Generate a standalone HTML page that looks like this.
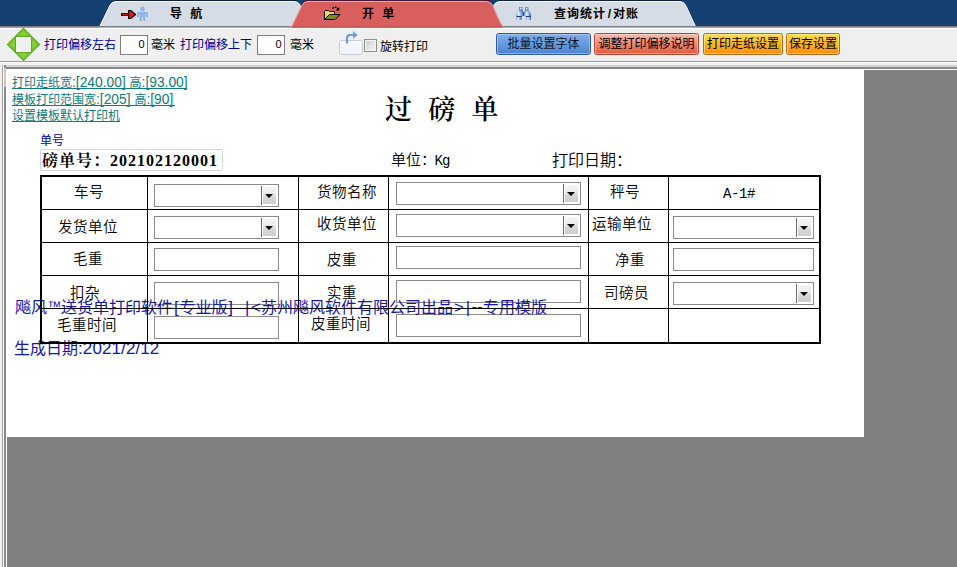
<!DOCTYPE html>
<html lang="zh-CN">
<head>
<meta charset="utf-8">
<title>过磅单</title>
<style>
html,body{margin:0;padding:0;}
body{width:957px;height:567px;overflow:hidden;position:relative;background:#808080;
  font-family:"Liberation Sans","Noto Sans CJK SC",sans-serif;font-size:12px;color:#000;}
.abs{position:absolute;}
.t{position:absolute;white-space:nowrap;line-height:1;}
/* top bar */
#topbar{left:0;top:0;width:957px;height:28px;background:#133f71;}
#topsvg{left:0;top:0;}
.tabtxt{font-weight:bold;font-size:12px;color:#000;letter-spacing:1px;word-spacing:3px;}
/* toolbar */
#toolbar{left:0;top:29px;width:957px;height:32px;background:#efefef;}
.blue{color:#00009c;}
.inp{position:absolute;background:#fff;border:1px solid #7f7f7f;box-sizing:border-box;}
.btn{position:absolute;box-sizing:border-box;height:22px;top:33px;border-radius:2.500px;font-size:12px;line-height:20px;text-align:center;white-space:nowrap;color:#000;}
/* paper */
#paper{left:6px;top:69px;width:858px;height:368px;background:#fff;}
.link{color:#0e7c7c;font-size:12px;}
.ul{position:absolute;height:1px;background:#167a7c;left:12px;}
.lab{font-size:14.500px;letter-spacing:0.500px;color:#000;font-weight:350;margin-top:0.500px;}
.serif{font-family:"Liberation Serif","Noto Serif CJK SC",serif;}
.hl{position:absolute;background:#000;height:1px;z-index:5;}
.vl{position:absolute;background:#000;width:1px;z-index:5;}
.fld{position:absolute;box-sizing:border-box;background:#fff;border:1px solid #8a8a8a;}
.dd{position:absolute;right:2px;top:2px;width:13px;height:17px;background:linear-gradient(#f4f4f4 0%,#eaeaea 47%,#d9d9d9 53%,#cdcdcd 100%);}
.dd:before{content:"";position:absolute;left:-2px;top:-1px;width:1px;height:19px;background:#6c6c6c;}
.dd:after{content:"";position:absolute;left:2.200px;top:7px;border-left:4px solid transparent;border-right:4px solid transparent;border-top:4.500px solid #000;}
.ov{color:#1616aa;font-size:16px;z-index:3;font-weight:400;}
.L{font-size:13.800px;}
.w{display:inline-block;text-align:center;font-size:17px;line-height:1;vertical-align:baseline;}
.m{font-family:"Liberation Mono","Noto Sans CJK SC",monospace;}
</style>
</head>
<body>
<!-- TOP BAR -->
<div class="abs" id="topbar"></div>
<svg class="abs" id="topsvg" width="957" height="29" viewBox="0 0 957 29">
  <defs>
    <linearGradient id="bino" x1="0" y1="0" x2="1" y2="0">
      <stop offset="0" stop-color="#7fa4e0"/><stop offset="0.35" stop-color="#e8f0ff"/><stop offset="1" stop-color="#3c68b8"/>
    </linearGradient>
  </defs>
  <!-- tab 1 -->
  <path d="M99 27.500 L109.500 5.500 Q111.500 1.500 116 1.500 L294.500 1.500 Q298.500 1.500 300.500 5.500 L311 27.500 Z" fill="#d5dce5"/>
  <path d="M99.500 27 L110 5.500 Q112 1.500 116 1.500 L294.500 1.500 Q298.500 1.500 300.500 5.500" fill="none" stroke="#f4f8fc" stroke-width="1"/>
  <!-- tab 3 -->
  <path d="M483 27.500 L493.500 5.500 Q495.500 1.500 500 1.500 L680 1.500 Q684 1.500 686 6 L696 27.500 Z" fill="#d5dce5"/>
  <path d="M493.500 5.500 Q495.500 1.500 500 1.500 L680 1.500 Q684 1.500 686 6 L695.300 26" fill="none" stroke="#f4f8fc" stroke-width="1"/>
  <rect x="114" y="0" width="183" height="1" fill="#0c2444"/><rect x="498" y="0" width="184" height="1" fill="#0c2444"/>
  <rect x="0" y="26" width="957" height="1.600" fill="#7f8084"/>
  <rect x="0" y="27.600" width="957" height="1.400" fill="#fdfdfd"/>
  <!-- tab 2 active -->
  <path d="M291 27.600 L301.500 5.500 Q303.500 1.500 308 1.500 L486.500 1.500 Q491 1.500 493 5.500 L499 19 Q501 24 503.500 26.500 L503.500 27.600 Z" fill="#d95f5f"/>
  <path d="M291.500 27 L302 5.500 Q304 1.500 308 1.500 L486.500 1.500 Q490.500 1.500 492.500 5.500 L498.500 19 Q500.500 24 503 26.500" fill="none" stroke="#f0a4a4" stroke-width="1"/>
  <rect x="303" y="0" width="188" height="1" fill="#4a1838"/>
  <rect x="292" y="26" width="210" height="1.600" fill="#c85858"/>
  <!-- arrow icon -->
  <g shape-rendering="crispEdges">
    <rect x="121" y="13" width="8" height="3" fill="#000"/>
    <rect x="122" y="14" width="8" height="1" fill="#e01818"/>
    <path d="M128 10 L131 10 L136 14 L136 15 L131 19 L128 19 Z" fill="#000" shape-rendering="auto"/>
    <path d="M129.200 11.200 L130.700 11.200 L134.500 14.500 L130.700 17.800 L129.200 17.800 Z" fill="#f01414" shape-rendering="auto"/>
  </g>
  <!-- person icon -->
  <g fill="#8db5ea">
    <circle cx="142.500" cy="9" r="2.400"/>
    <path d="M138.500 12 L146.500 12 Q148 12 148 13.500 L148 17 L146 17 L146 14 L145.300 14 L145.300 21 L143.200 21 L143.200 17 L141.800 17 L141.800 21 L139.700 21 L139.700 14 L139 14 L139 17 L137 17 L137 13.500 Q137 12 138.500 12 Z"/>
  </g>
  <!-- folder icon -->
  <g>
    <path d="M324.500 19.500 L324.500 11.500 L325.500 10.500 L328.500 10.500 L329.500 11.500 L334.500 11.500 L334.500 14.500 L324.500 19.500 Z" fill="#eed85c" stroke="#000" stroke-width="1"/>
    <path d="M324.500 19.500 L329.500 14.500 L340 14.500 L335 19.500 Z" fill="#7e8c1c" stroke="#000" stroke-width="1"/>
    <path d="M332.300 8.600 Q335 5.800 337.800 8.600" fill="none" stroke="#000" stroke-width="1.200" stroke-dasharray="2 0.800"/>
    <path d="M335.600 10.600 L339.300 10.600 L339.300 7 Z" fill="#000"/>
  </g>
  <!-- binoculars -->
  <g>
    <rect x="521.500" y="12" width="4" height="3.800" fill="#2c50a0"/>
    <rect x="519" y="7" width="3.400" height="3.200" fill="#5f84c8"/>
    <rect x="525" y="7" width="3.400" height="3.200" fill="#5f84c8"/>
    <rect x="519.900" y="7.700" width="1.500" height="1.500" fill="#f4f8ff"/>
    <rect x="525.900" y="7.700" width="1.500" height="1.500" fill="#f4f8ff"/>
    <path d="M518.600 10.200 L522.800 10.200 L523.300 12 L523.300 16 L516.300 16 L516.300 14 L517.800 12 Z" fill="url(#bino)"/>
    <path d="M524.600 10.200 L528.800 10.200 L529.600 12 L531.100 14 L531.100 16 L524.300 16 L524.300 12 Z" fill="url(#bino)"/>
    <rect x="518.600" y="10.200" width="4.200" height="1.500" fill="#4468b4" opacity="0.550"/>
    <rect x="524.600" y="10.200" width="4.200" height="1.500" fill="#4468b4" opacity="0.550"/>
    <rect x="516.300" y="16" width="5.600" height="1.300" fill="#1c3c8c"/>
    <rect x="525.800" y="16" width="5.300" height="1.300" fill="#1c3c8c"/>
    <rect x="516.300" y="17.300" width="5.200" height="2.700" fill="url(#bino)"/>
    <rect x="526" y="17.300" width="5.100" height="2.700" fill="url(#bino)"/>
  </g>
</svg>
<div class="t tabtxt" style="left:170px;top:8px;">导 航</div>
<div class="t tabtxt" style="left:362px;top:8px;">开 单</div>
<div class="t tabtxt" style="left:554px;top:8px;">查询统计<span style="display:inline-block;width:7px;text-align:center;letter-spacing:0;">/</span>对账</div>

<!-- TOOLBAR -->
<div class="abs" id="toolbar"></div>
<svg class="abs" style="left:0;top:27px;" width="440" height="35" viewBox="0 27 440 35">
  <defs>
    <linearGradient id="rotbox" x1="0" y1="0" x2="0" y2="1"><stop offset="0" stop-color="#f7fafe"/><stop offset="1" stop-color="#edf3fb"/></linearGradient>
  </defs>
  <!-- green diamond -->
  <path d="M23.500 27.600 L40.400 44.500 L23.500 61.300 L6.600 44.500 Z" fill="#62aa26"/>
  <path d="M23.500 29.200 L38.800 44.500 L23.500 59.700 L8.200 44.500 Z" fill="#7ac62f"/>
  <path d="M23.500 31.500 L27.500 35.500 L19.500 35.500 Z" fill="#88d23c"/>
  <path d="M23.500 57.500 L27.500 53.500 L19.500 53.500 Z" fill="#88d23c"/>
  <path d="M10.500 44.500 L14.500 40.500 L14.500 48.500 Z" fill="#88d23c"/>
  <path d="M36.500 44.500 L32.500 40.500 L32.500 48.500 Z" fill="#88d23c"/>
  <rect x="15" y="36" width="17" height="17" fill="#5ea824"/>
  <rect x="16" y="37" width="15" height="15" fill="#efffd8"/>
  <rect x="17" y="38" width="13" height="13" fill="#efefef"/>
  <!-- rotate icon -->
  <rect x="339.500" y="40.500" width="23" height="14" rx="2" ry="2" fill="url(#rotbox)" stroke="#c8cdd6" stroke-width="1"/>
  <path d="M347 43.500 L347 38 Q347 35 350 35 L353.500 35" fill="none" stroke="#6c9cdc" stroke-width="2.200"/>
  <path d="M353 31.300 L357.800 35 L353 38.700 Z" fill="#6c9cdc"/>
</svg>
<div class="t blue" style="left:44px;top:39px;">打印偏移左右</div>
<div class="inp" style="left:120px;top:35px;width:28px;height:20px;"></div>
<div class="t" style="left:138.500px;top:39px;font-size:11px;">0</div>
<div class="t" style="left:151px;top:39px;">毫米</div>
<div class="t blue" style="left:180px;top:39px;">打印偏移上下</div>
<div class="inp" style="left:257px;top:35px;width:28px;height:20px;"></div>
<div class="t" style="left:275.500px;top:39px;font-size:11px;">0</div>
<div class="t" style="left:290px;top:39px;">毫米</div>
<div class="inp" style="left:364px;top:39px;width:13px;height:13px;border-color:#8e8f8f;background:linear-gradient(135deg,#c8c8c8,#fafafa);box-shadow:inset 0 0 0 1px #f4f4f4;"></div>
<div class="t" style="left:380px;top:41px;">旋转打印</div>
<div class="btn" style="left:496px;width:95px;border:1px solid #2d5c9e;background:linear-gradient(#82aee7,#6a9cdc 45%,#4a84ce);box-shadow:inset 0 0 0 1px rgba(190,215,250,0.550);color:#0a1428;">批量设置字体</div>
<div class="btn" style="left:594px;width:105px;border:1px solid #b8442e;background:linear-gradient(#f7bcae,#ee8c76 45%,#e2583e);box-shadow:inset 0 0 0 1px rgba(255,220,210,0.550);">调整打印偏移说明</div>
<div class="btn" style="left:703px;width:80px;border:1px solid #b46c1c;background:linear-gradient(#ffe04a,#ffb828 45%,#ff8a0c);box-shadow:inset 0 0 0 1px rgba(255,240,170,0.550);">打印走纸设置</div>
<div class="btn" style="left:786px;width:54px;border:1px solid #b46c1c;background:linear-gradient(#ffe04a,#ffb828 45%,#ff8a0c);box-shadow:inset 0 0 0 1px rgba(255,240,170,0.550);">保存设置</div>

<!-- SEPARATOR -->
<div class="abs" style="left:0;top:61px;width:957px;height:1px;background:#9c9c9c;"></div>
<div class="abs" style="left:0;top:62px;width:957px;height:1px;background:#fff;"></div>
<div class="abs" style="left:0;top:63px;width:957px;height:2px;background:#f0f0f0;"></div>
<div class="abs" style="left:0;top:65px;width:957px;height:2px;background:#d3d1d1;"></div>
<div class="abs" style="left:0;top:67px;width:957px;height:2px;background:#88888c;"></div>
<div class="abs" style="left:0;top:69px;width:957px;height:1px;background:#fff;"></div>
<!-- left edge -->
<div class="abs" style="left:0;top:63px;width:2px;height:504px;background:#f0f0f0;"></div>
<div class="abs" style="left:2px;top:65px;width:1px;height:502px;background:#a0a0a0;"></div>
<div class="abs" style="left:3px;top:65px;width:1px;height:502px;background:#fff;"></div>
<div class="abs" style="left:4px;top:65px;width:2px;height:502px;background:#88888e;"></div>
<div class="abs" style="left:4px;top:68px;width:2px;height:19px;background:#e4bcbc;"></div>
<div class="abs" style="left:6px;top:69px;width:1px;height:498px;background:#fff;"></div>

<!-- PAPER -->
<div class="abs" id="paper"></div>
<div class="t link" style="left:12px;top:76px;">打印走纸宽<span class="L">:[240.00] </span>高<span class="L">:[93.00]</span></div>
<div class="t link" style="left:12px;top:93px;">模板打印范围宽<span class="L">:[205] </span>高<span class="L">:[90]</span></div>
<div class="t link" style="left:12px;top:110px;">设置模板默认打印机</div>
<div class="ul" style="top:88px;width:175px;"></div><div class="ul" style="top:105px;width:163px;"></div><div class="ul" style="top:121px;width:108px;"></div>

<div class="t serif" style="left:385px;top:97px;font-size:27px;font-weight:600;letter-spacing:1px;word-spacing:7.5px;">过 磅 单</div>
<div class="t blue" style="left:40px;top:135px;">单号</div>
<div class="abs" style="left:40px;top:149px;width:183px;height:22px;border:1px solid #d4d4dc;border-radius:2px;box-sizing:border-box;"></div>
<div class="t serif" style="left:42px;top:153px;font-size:16px;font-weight:bold;letter-spacing:1px;">磅单号：<span style="letter-spacing:1px;">202102120001</span></div>
<div class="t" style="left:391px;top:152px;font-size:15px;font-weight:350;">单位：<span class="m" style="font-size:14px;letter-spacing:-0.900px;margin-left:-1.500px;">Kg</span></div>
<div class="t" style="left:552px;top:153px;font-size:16px;font-weight:350;">打印日期：</div>

<!-- TABLE -->
<div class="abs" style="left:40px;top:175px;width:781px;height:169px;border:2px solid #000;box-sizing:border-box;z-index:5;"></div>
<div class="hl" style="left:40px;top:209px;width:780px;"></div>
<div class="hl" style="left:40px;top:242px;width:780px;"></div>
<div class="hl" style="left:40px;top:275px;width:780px;"></div>
<div class="hl" style="left:40px;top:308px;width:780px;"></div>
<div class="vl" style="left:147px;top:175px;height:168px;"></div>
<div class="vl" style="left:298px;top:175px;height:168px;"></div>
<div class="vl" style="left:388px;top:175px;height:168px;"></div>
<div class="vl" style="left:588px;top:175px;height:168px;"></div>
<div class="vl" style="left:668px;top:175px;height:168px;"></div>

<div class="t lab" style="left:74px;top:184px;">车号</div>
<div class="t lab" style="left:58px;top:219px;">发货单位</div>
<div class="t lab" style="left:73px;top:251px;">毛重</div>
<div class="t lab" style="left:70px;top:285px;">扣杂</div>
<div class="t lab" style="left:57px;top:317px;">毛重时间</div>
<div class="t lab" style="left:317px;top:184px;">货物名称</div>
<div class="t lab" style="left:317px;top:216px;">收货单位</div>
<div class="t lab" style="left:327px;top:252px;">皮重</div>
<div class="t lab" style="left:327px;top:285px;">实重</div>
<div class="t lab" style="left:311px;top:316px;">皮重时间</div>
<div class="t lab" style="left:610px;top:184px;">秤号</div>
<div class="t lab" style="left:592px;top:216px;">运输单位</div>
<div class="t lab" style="left:615px;top:252px;">净重</div>
<div class="t lab" style="left:604px;top:285px;">司磅员</div>
<div class="t m" style="left:723px;top:187px;font-size:14px;letter-spacing:-0.400px;">A-1#</div>

<div class="fld" style="left:154px;top:184px;width:125px;height:23px;"><div class="dd"></div></div>
<div class="fld" style="left:154px;top:216px;width:125px;height:23px;"><div class="dd"></div></div>
<div class="fld" style="left:154px;top:248px;width:125px;height:23px;"></div>
<div class="fld" style="left:154px;top:282px;width:125px;height:23px;"></div>
<div class="fld" style="left:154px;top:316px;width:125px;height:23px;"></div>

<div class="fld" style="left:396px;top:182px;width:185px;height:23px;"><div class="dd"></div></div>
<div class="fld" style="left:396px;top:214px;width:185px;height:23px;"><div class="dd"></div></div>
<div class="fld" style="left:396px;top:246px;width:185px;height:23px;"></div>
<div class="fld" style="left:396px;top:280px;width:185px;height:23px;"></div>
<div class="fld" style="left:396px;top:314px;width:185px;height:23px;"></div>

<div class="fld" style="left:673px;top:216px;width:141px;height:23px;"><div class="dd"></div></div>
<div class="fld" style="left:673px;top:248px;width:141px;height:23px;"></div>
<div class="fld" style="left:673px;top:282px;width:141px;height:23px;"><div class="dd"></div></div>

<!-- overlay -->
<div class="t ov" style="left:15px;top:299px;">飚风<span class="w" style="width:14px;font-size:14px;position:relative;top:-2px;">™</span>送货单打印软件<span class="w" style="width:6.500px;">[</span>专业版<span class="w" style="width:6px;">]</span><span class="w" style="width:10px;"> </span><span class="w" style="width:7.500px;">|</span><span class="w" style="width:10px;">&lt;</span>苏州飚风软件有限公司出品<span class="w" style="width:12px;">&gt;</span><span class="w" style="width:6px;">|</span><span class="w" style="width:12px;letter-spacing:0;position:relative;top:-1px;">--</span>专用模版</div>
<div class="t ov" style="left:14px;top:340px;">生成日期<span style="font-size:17px;letter-spacing:0.100px;">:2021/2/12</span></div>
</body>
</html>
